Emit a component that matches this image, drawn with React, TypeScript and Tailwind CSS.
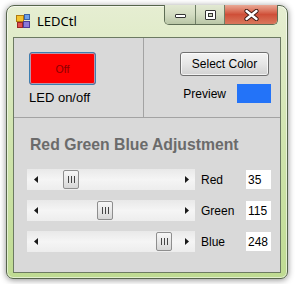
import React from "react";

const sliders = [
  { label: "Red", value: 35, thumb: "ml-[19px]" },
  { label: "Green", value: 115, thumb: "ml-[53px]" },
  { label: "Blue", value: 248, thumb: "ml-[112px]" },
];

function AppIcon() {
  return (
    <svg width="14" height="14" viewBox="0 0 14 14">
      <rect x="0.5" y="1.5" width="7" height="6" fill="#f4c430" stroke="#b07a10" />
      <rect x="8.5" y="0.5" width="5" height="5" fill="#6fa0e8" stroke="#3a64a8" />
      <rect x="1.5" y="8.5" width="5" height="5" fill="#e05050" stroke="#982828" />
      <rect x="7.5" y="7.5" width="6" height="6" fill="#8a7ad8" stroke="#4a3c98" />
    </svg>
  );
}

function Arrow({ dir }: { dir: "left" | "right" }) {
  return (
    <svg width="4" height="7" viewBox="0 0 4 7">
      {dir === "left" ? (
        <polygon points="4,0 4,7 0,3.5" fill="#1a1a1a" />
      ) : (
        <polygon points="0,0 0,7 4,3.5" fill="#1a1a1a" />
      )}
    </svg>
  );
}

function ScrollBar({ thumb }: { thumb: string }) {
  return (
    <div className="flex h-[21px] w-[168px] bg-gradient-to-b from-[#e9e9e9] via-[#f5f5f5] to-[#ededed]">
      <div className="flex w-[17px] items-center justify-center">
        <Arrow dir="left" />
      </div>
      <div className="flex flex-1 items-stretch py-[1px]">
        <div
          className={`${thumb} flex w-[16px] items-center justify-center gap-[2px] rounded-[2px] border border-[#8e8e8e] bg-gradient-to-b from-[#f6f6f6] via-[#e8e8e8] to-[#d6d6d6]`}
        >
          <div className="h-[7px] w-[1px] bg-[#454545]" />
          <div className="h-[7px] w-[1px] bg-[#454545]" />
          <div className="h-[7px] w-[1px] bg-[#454545]" />
        </div>
      </div>
      <div className="flex w-[17px] items-center justify-center">
        <Arrow dir="right" />
      </div>
    </div>
  );
}

export default function App() {
  return (
    <div className="h-[284px] w-[296px] overflow-hidden bg-white pl-[6px] pt-[5px]">
      {/* Window frame */}
      <div className="flex h-[274px] w-[282px] flex-col rounded-t-[8px] rounded-b-[7px] border border-[#56654c] bg-gradient-to-b from-[#e6eed2] via-[#d0e4ae] to-[#bfdb92] px-[6px] pb-[5px] shadow-[0_1px_6px_rgba(0,0,0,0.45),inset_0_0_0_1px_rgba(255,255,255,0.55)]">
        {/* Title bar */}
        <div className="flex h-[31px] items-start">
          <div className="mt-[8px] ml-[3px] flex items-center gap-[7px]">
            <AppIcon />
            <span className="font-['Noto_Sans',sans-serif] text-[13px] leading-[14px] text-black">
              LEDCtl
            </span>
          </div>
          <div className="-mt-[1px] mr-[3px] ml-auto flex h-[20px] overflow-hidden rounded-b-[5px] border border-t-0 border-[#5e6d55]">
            <div className="flex w-[31px] items-center justify-center border-r border-[#6f7e66] bg-gradient-to-b from-[#e2e9d2] via-[#d3dcc2] to-[#b9c6a6]">
              <div className="mt-[3px] h-[4px] w-[11px] rounded-[1px] border border-[#333] bg-white" />
            </div>
            <div className="flex w-[29px] items-center justify-center border-r border-[#6f7e66] bg-gradient-to-b from-[#e2e9d2] via-[#d3dcc2] to-[#b9c6a6]">
              <div className="flex h-[10px] w-[11px] items-center justify-center rounded-[1px] border border-[#333] bg-white">
                <div className="mt-[1px] h-[4px] w-[5px] border border-[#333] bg-[#cfd8c0]" />
              </div>
            </div>
            <div className="flex w-[52px] items-center justify-center bg-gradient-to-b from-[#e9a996] via-[#cf4f38] to-[#d9775c]">
              <svg width="15" height="12" viewBox="0 0 15 12">
                <path d="M2.5 2 L12.5 10 M12.5 2 L2.5 10" stroke="#3b1a14" strokeWidth="4.2" strokeLinecap="round" />
                <path d="M2.5 2 L12.5 10 M12.5 2 L2.5 10" stroke="#ffffff" strokeWidth="2.4" strokeLinecap="round" />
              </svg>
            </div>
          </div>
        </div>

        {/* Client area */}
        <div className="flex flex-1 flex-col border border-[#6c7a62] bg-[#d9d9d9] font-['Liberation_Sans',Arial,sans-serif] text-black">
          <div className="flex h-[80px] border-b border-[#a3a3a3]">
            <div className="flex w-[130px] flex-col border-r border-[#a3a3a3] pl-[15px] pt-[14px]">
              <div className="flex h-[33px] w-[67px] items-center justify-center rounded-[3px] border border-[#3c7fb1] bg-[#ff0000] shadow-[inset_0_0_0_1px_rgba(160,210,240,0.7)]">
                <span className="text-[10.5px] leading-[12px] text-[#8c0000]">Off</span>
              </div>
              <div className="mt-[5px] text-[13px] leading-[15px]">LED on/off</div>
            </div>
            <div className="flex flex-1 flex-col items-end pr-[11px] pt-[14px]">
              <div className="flex h-[24px] w-[89px] items-center justify-center rounded-[3px] border border-[#707070] bg-gradient-to-b from-[#f3f3f3] via-[#e6e6e6] to-[#d2d2d2] text-[12px] leading-[14px] shadow-[inset_0_0_0_1px_rgba(255,255,255,0.7)]">
                Select Color
              </div>
              <div className="mt-[8px] mr-[-2px] flex items-center gap-[11px]">
                <span className="text-[12px] leading-[14px]">Preview</span>
                <div className="h-[19px] w-[34px] bg-[#2373f8]" />
              </div>
            </div>
          </div>

          <div className="flex flex-col pl-[13px] pt-[18px]">
            <div className="pl-[3px] text-[15.75px] font-bold leading-[18px] text-[#6b6b6b]">
              Red Green Blue Adjustment
            </div>
            <div className="mt-[15px] flex flex-col gap-[10px]">
              {sliders.map((s) => (
                <div key={s.label} className="flex h-[21px] items-center">
                  <ScrollBar thumb={s.thumb} />
                  <span className="ml-[6px] w-[45px] text-[12px] leading-[14px]">{s.label}</span>
                  <div className="flex h-[19px] w-[25px] items-center bg-white pl-[2px] text-[12px] leading-[14px]">
                    {s.value}
                  </div>
                </div>
              ))}
            </div>
          </div>
        </div>
      </div>
    </div>
  );
}
